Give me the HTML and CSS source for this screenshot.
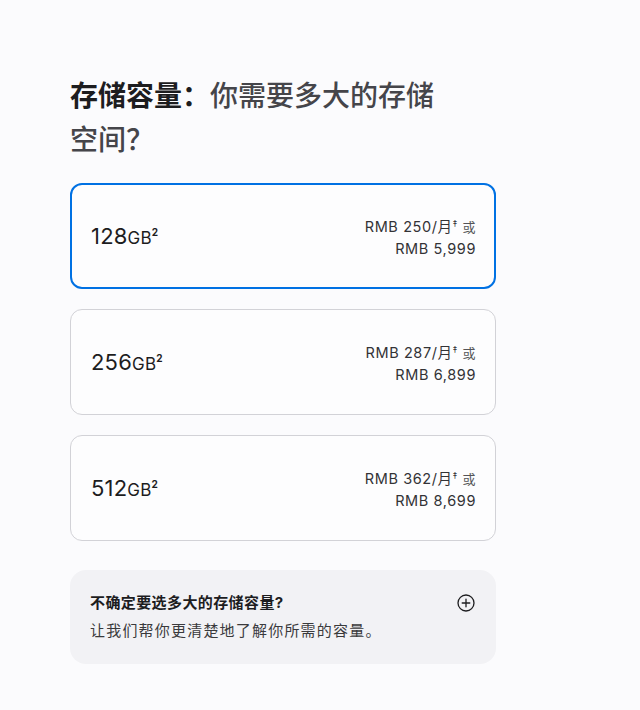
FILE: index.html
```html
<html>
<head>
    <title>存储容量</title>
    <link rel="stylesheet" href="styles.css">
</head>
<body>
    <div id="page">
        <h2 class="title"><span class="title-strong">存储容量：</span>你需要多大的存储空间？</h2>

        <div class="options">
            <div class="option selected">
                <div class="size">128<span class="unit">GB</span><sup>2</sup></div>
                <div class="price">
                    <div>RMB 250/月<sup class="mark">‡</sup> <span class="or">或</span></div>
                    <div>RMB 5,999</div>
                </div>
            </div>
            <div class="option">
                <div class="size">256<span class="unit">GB</span><sup>2</sup></div>
                <div class="price">
                    <div>RMB 287/月<sup class="mark">‡</sup> <span class="or">或</span></div>
                    <div>RMB 6,899</div>
                </div>
            </div>
            <div class="option">
                <div class="size">512<span class="unit">GB</span><sup>2</sup></div>
                <div class="price">
                    <div>RMB 362/月<sup class="mark">‡</sup> <span class="or">或</span></div>
                    <div>RMB 8,699</div>
                </div>
            </div>
        </div>

        <div class="help">
            <div class="help-text">
                <div class="help-title">不确定要选多大的存储容量?</div>
                <div class="help-sub">让我们帮你更清楚地了解你所需的容量。</div>
            </div>
            <svg class="plus" width="18" height="18" viewBox="0 0 18 18">
                <circle cx="9" cy="9" r="8" fill="none" stroke="#1d1d1f" stroke-width="1.3"/>
                <path d="M9 5.2v7.6M5.2 9h7.6" stroke="#1d1d1f" stroke-width="1.3" stroke-linecap="round"/>
            </svg>
        </div>
    </div>
</body>
</html>
```

FILE: styles.css
```css
body {
    margin: 0;
    background-color: #fbfbfd;
    font-family: Inter, "Noto Sans CJK SC", sans-serif;
    color: #1d1d1f;
}

#page {
    width: 426px;
    padding: 74px 0 0 70px;
}

.title {
    max-width: 372px;
    margin: 0 0 21px 0;
    font-size: 28px;
    line-height: 44px;
    font-weight: 500;
    color: #45454a;
}

.title-strong {
    color: #1d1d1f;
    font-weight: 700;
}

.options {
    display: flex;
    flex-direction: column;
    gap: 20px;
}

.option {
    display: flex;
    align-items: center;
    justify-content: space-between;
    height: 104px;
    padding: 0 19px 0 20px;
    border: 1px solid #d2d2d7;
    border-radius: 12px;
    background-color: #fdfdfe;
}

.option.selected {
    border: 2px solid #0071e3;
    height: 102px;
    padding: 0 18px 0 19px;
}

.size {
    font-size: 22px;
    font-weight: 400;
    letter-spacing: 0.2px;
}

.unit {
    font-size: 17px;
}

.size sup {
    font-size: 10px;
    font-weight: 700;
    vertical-align: 8px;
}

.price {
    text-align: right;
    font-size: 14.5px;
    line-height: 21px;
    color: #333336;
    letter-spacing: 0.6px;
}

.mark {
    font-size: 9px;
    vertical-align: 5px;
}

.or {
    font-size: 13px;
    color: #555558;
}

.help {
    display: flex;
    justify-content: space-between;
    align-items: flex-start;
    margin-top: 29px;
    padding: 22px 21px 22px 20px;
    background-color: #f2f2f5;
    border-radius: 16px;
}

.help-title {
    font-size: 15px;
    font-weight: 700;
    line-height: 22px;
    letter-spacing: 0.4px;
}

.help-sub {
    margin-top: 6px;
    font-size: 15px;
    line-height: 22px;
    color: #3a3a3c;
    letter-spacing: 1.2px;
}

.plus {
    margin-top: 2px;
}
```
